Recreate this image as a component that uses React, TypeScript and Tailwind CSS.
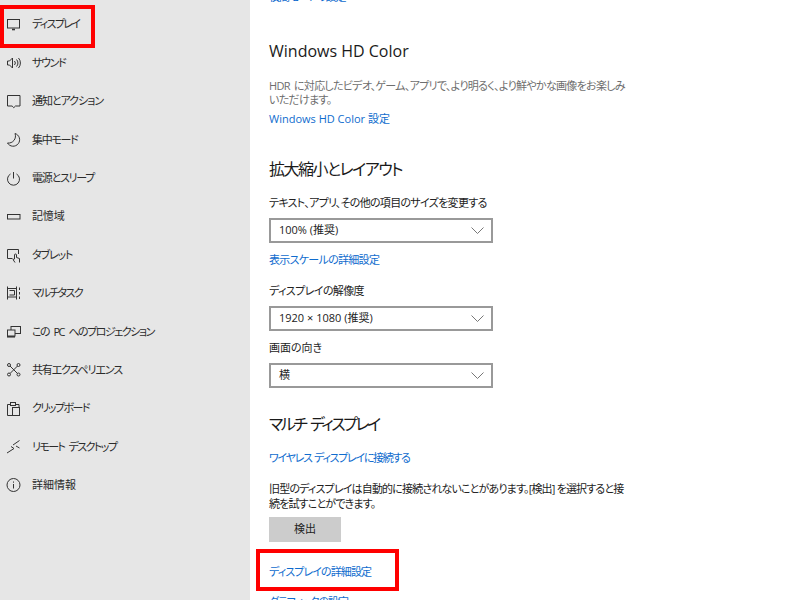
import React from 'react';

const FONT = "font-['Open_Sans','Noto_Sans_CJK_JP',sans-serif] [font-feature-settings:'palt']";

// Settings nav icons, drawn on a 16px box
const navIcons: Record<string, React.ReactNode> = {
    display: <><rect x="1.5" y="2.5" width="12" height="8.5" /><path d="M6 12.5h3" strokeWidth="1.6" /></>,
    sound: <><path d="M1.5 6v4h2l3 3V3l-3 3z" /><path d="M8.5 6a3 3 0 0 1 0 4M10.5 4.5a5 5 0 0 1 0 7M12.5 3a7.5 7.5 0 0 1 0 10" /></>,
    notify: <path d="M1.5 2.5h12.5v10.5h-4.5l-1.7 1.7-1.7-1.7h-4.600z" />,
    moon: <path d="M9 1.500A6.500 6.500 0 1 1 1.500 11 7 7 0 0 0 9 1.500z" />,
    power: <><path d="M7.500 2v6.500" /><path d="M4.500 4a6 6 0 1 0 6 0" /></>,
    storage: <rect x="1.500" y="5.500" width="12.500" height="4.500" />,
    tablet: <><path d="M6.500 11.500H1.500v-9h11V7" /><path d="M9 15.500l-2-3 1.500-.5V8a1 1 0 0 1 2 0v2.500l3 1v4" fill="#e6e6e6" /></>,
    multitask: <><path d="M1.500 1.500v13M1.500 3.500h9M1.500 12h9M3.500 5.500h5v4.500h-5M10.500 1.500v13M13.500 2.500v2.500M13.500 7v2.500M13.500 11.500v2.500" /></>,
    project: <><rect x="5" y="2.500" width="9.500" height="7" /><rect x="1.500" y="6" width="7.500" height="6" fill="#e6e6e6" /><path d="M1 12.800h8" strokeWidth="1.500" /></>,
    shared: <><circle cx="3" cy="3" r="1.500" /><circle cx="12.500" cy="3" r="1.500" /><circle cx="3" cy="12.500" r="1.500" /><circle cx="12.500" cy="12.500" r="1.500" /><path d="M4 4l7.500 7.500M11.500 4L4 11.500" /></>,
    clipboard: <><path d="M4.500 3.500H1.500v11H6M10 3.500h3v3" /><rect x="4.500" y="1.500" width="5" height="3" /><rect x="6.500" y="6.500" width="7" height="8" /></>,
    remote: <><path d="M1 14l7-4.500-3-2M13.500 1.500L7 6" /><path d="M13.500 9L10 7" /></>,
    info: <><circle cx="7.500" cy="8" r="6.500" /><path d="M7.500 7v4.500M7.500 4.500v1.200" /></>,
};

const navItems = [
    { icon: 'display', label: 'ディスプレイ', track: 'tracking-[-1.7px]' },
    { icon: 'sound', label: 'サウンド', track: 'tracking-[-1.3px]' },
    { icon: 'notify', label: '通知とアクション', track: 'tracking-[-1.05px]' },
    { icon: 'moon', label: '集中モード', track: 'tracking-[-1.3px]' },
    { icon: 'power', label: '電源とスリープ', track: 'tracking-[-1.25px]' },
    { icon: 'storage', label: '記憶域', track: 'tracking-[-0.15px]' },
    { icon: 'tablet', label: 'タブレット', track: 'tracking-[-1.2px]' },
    { icon: 'multitask', label: 'マルチタスク', track: 'tracking-[-1.55px]' },
    { icon: 'project', label: 'この PC へのプロジェクション', track: 'tracking-[-1.5px] [word-spacing:3px]' },
    { icon: 'shared', label: '共有エクスペリエンス', track: 'tracking-[-1.15px]' },
    { icon: 'clipboard', label: 'クリップボード', track: 'tracking-[-1.55px]' },
    { icon: 'remote', label: 'リモート デスクトップ', track: 'tracking-[-1.6px] [word-spacing:3px]' },
    { icon: 'info', label: '詳細情報', track: '' },
];

const Select = ({ value }: { value: string }) => (
    <div className="flex h-[25px] w-[224px] items-center justify-between border-2 border-[#999999] bg-white pl-[8px] pr-[7px] text-[11px] text-[#222222]">
        <span>{value}</span>
        <svg width="13" height="8" viewBox="0 0 13 8" fill="none" stroke="#777777" strokeWidth="1">
            <path d="M0.500 0.500L6.500 6.500L12.500 0.500" />
        </svg>
    </div>
);

const Link = ({ children, className = '' }: { children: React.ReactNode; className?: string }) => (
    <div className={`text-[11px] leading-[16px] text-[#0f6cce] ${className}`}>{children}</div>
);

const Heading = ({ children, className = '' }: { children: React.ReactNode; className?: string }) => (
    <div className={`text-[16px] leading-[22px] text-[#1a1a1a] ${className}`}>{children}</div>
);

const Label = ({ children, className = '' }: { children: React.ReactNode; className?: string }) => (
    <div className={`text-[11px] leading-[16px] text-[#222222] ${className}`}>{children}</div>
);

export default function App() {
    return (
        <div className={`relative flex h-[600px] w-[800px] overflow-hidden bg-white ${FONT}`}>
            {/* Sidebar */}
            <div className="h-full w-[250px] shrink-0 bg-[#e6e6e6] pt-[5.500px]">
                {navItems.map((item) => (
                    <div key={item.icon} className="flex h-[38.400px] items-center pl-[6px] text-[11px] text-[#2b2b2b]">
                        <svg width="16" height="16" viewBox="0 0 16 16" fill="none" stroke="#333333" strokeWidth="1" className="shrink-0">
                            {navIcons[item.icon]}
                        </svg>
                        <span className={`ml-[10px] ${item.track}`}>{item.label}</span>
                    </div>
                ))}
            </div>

            {/* Content */}
            <div className="flex-1 pl-[19px]">
                <Link className="mt-[-11px] tracking-[-1px]">夜間モードの設定</Link>
                <Heading className="mt-[35px]">Windows HD Color</Heading>
                <div className="mt-[17px] w-[358px] text-[11px] leading-[14px] tracking-[-0.7px] [word-spacing:2px] text-[#6e6e6e]">
                    HDR に対応したビデオ、ゲーム、アプリで、より明るく、より鮮やかな画像をお楽しみいただけます。
                </div>
                <Link className="mt-[4px]">Windows HD Color 設定</Link>
                <Heading className="mt-[31px] tracking-[-1.5px]">拡大縮小とレイアウト</Heading>
                <Label className="mt-[15px] tracking-[-0.7px]">テキスト、アプリ、その他の項目のサイズを変更する</Label>
                <div className="mt-[7px]"><Select value="100% (推奨)" /></div>
                <Link className="mt-[9px] tracking-[-0.7px]">表示スケールの詳細設定</Link>
                <Label className="mt-[15px] tracking-[-0.6px]">ディスプレイの解像度</Label>
                <div className="mt-[7px]"><Select value="1920 × 1080 (推奨)" /></div>
                <Label className="mt-[9px]">画面の向き</Label>
                <div className="mt-[7px]"><Select value="横" /></div>
                <Heading className="mt-[25px] tracking-[-2.5px] [word-spacing:3px]">マルチ ディスプレイ</Heading>
                <Link className="mt-[15px] tracking-[-1.3px] [word-spacing:1px]">ワイヤレス ディスプレイに接続する</Link>
                <div className="mt-[15px] w-[358px] text-[11px] leading-[15px] tracking-[-0.83px] text-[#222222]">
                    旧型のディスプレイは自動的に接続されないことがあります。[検出] を選択すると接続を試すことができます。
                </div>
                <div className="mt-[6px] flex h-[25px] w-[72px] items-center justify-center bg-[#cccccc] text-[11px] text-[#222222]">検出</div>
                <Link className="mt-[22px] tracking-[-0.9px]">ディスプレイの詳細設定</Link>
                <Link className="mt-[14px] tracking-[-1px]">グラフィックの設定</Link>
            </div>

            {/* Red callouts */}
            <div className="absolute left-0 top-[5px] h-[43px] w-[95px] border-[4px] border-[#ff0000]" />
            <div className="absolute left-[256px] top-[549px] h-[42px] w-[143px] border-[4px] border-[#ff0000]" />
        </div>
    );
}
